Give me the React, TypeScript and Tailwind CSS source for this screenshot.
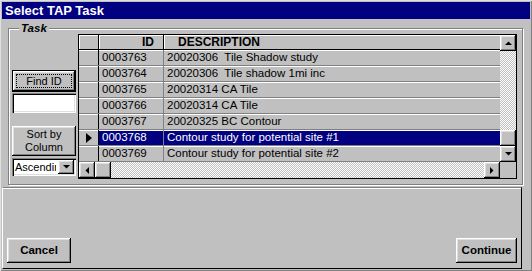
import React from "react";

const raised =
  "bg-[#c0c0c0] shadow-[inset_-1px_-1px_0_#000,inset_1px_1px_0_#fff,inset_-2px_-2px_0_#808080,inset_2px_2px_0_#dfdfdf]";
const sunken =
  "bg-white shadow-[inset_1px_1px_0_#808080,inset_2px_2px_0_#000,inset_-1px_-1px_0_#fff,inset_-2px_-2px_0_#dfdfdf]";
const dither =
  "bg-[image:repeating-conic-gradient(#fff_0_25%,#c0c0c0_0_50%)] bg-[length:2px_2px]";

const tasks = [
  { id: "0003763", description: "20020306  Tile Shadow study" },
  { id: "0003764", description: "20020306  Tile shadow 1mi inc" },
  { id: "0003765", description: "20020314 CA Tile" },
  { id: "0003766", description: "20020314 CA Tile" },
  { id: "0003767", description: "20020325 BC Contour" },
  { id: "0003768", description: "Contour study for potential site #1" },
  { id: "0003769", description: "Contour study for potential site #2" },
];

const selectedId = "0003768";

type Dir = "up" | "down" | "left" | "right";

const Arrow = ({ dir }: { dir: Dir }) => {
  const points = {
    up: "0,4 7,4 3.5,0.5",
    down: "0,0 7,0 3.5,3.5",
    left: "4,0 4,7 0.5,3.5",
    right: "0,0 0,7 3.5,3.5",
  }[dir];
  const vertical = dir === "up" || dir === "down";
  return (
    <svg width={vertical ? 7 : 4} height={vertical ? 4 : 7} viewBox={vertical ? "0 0 7 4" : "0 0 4 7"}>
      <polygon points={points} fill="#000" />
    </svg>
  );
};

const ScrollButton = ({ dir }: { dir: Dir }) => (
  <div className={`flex h-[16px] w-[16px] shrink-0 items-center justify-center ${raised}`}>
    <Arrow dir={dir} />
  </div>
);

const TaskGrid = () => (
  <div className="flex h-[145px] w-[439px] flex-col border border-black bg-[#c0c0c0] text-[11.5px] text-black">
    <div className="flex h-[127px]">
      <div className="flex w-[421px] flex-col">
        <div className="flex h-[15px] border-b border-black font-bold text-[12px] leading-[14px]">
          <div className="w-[20px] border-r border-black shadow-[inset_1px_1px_0_#fff]" />
          <div className="w-[65px] border-r border-black pr-[9px] text-right shadow-[inset_1px_1px_0_#fff]">ID</div>
          <div className="flex-1 pl-[14px] shadow-[inset_1px_1px_0_#fff]">DESCRIPTION</div>
        </div>
        {tasks.map((task) => {
          const selected = task.id === selectedId;
          const cell = selected
            ? "bg-[#000080] text-white"
            : "bg-[#c0c0c0] text-black";
          return (
            <div key={task.id} className="flex h-[16px] border-b border-[#808080] leading-[15px]">
              <div className="flex w-[20px] items-center justify-center border-r border-black shadow-[inset_0_1px_0_#fff]">
                {selected && (
                  <svg width="6" height="10" viewBox="0 0 6 10">
                    <polygon points="0,0 6,5 0,10" fill="#000" />
                  </svg>
                )}
              </div>
              <div className={`w-[65px] border-r border-[#808080] pl-[3px] shadow-[inset_0_1px_0_#fff] ${cell}`}>
                {task.id}
              </div>
              <div className={`flex-1 whitespace-pre pl-[3px] shadow-[inset_0_1px_0_#fff] ${cell}`}>
                {task.description}
              </div>
            </div>
          );
        })}
      </div>
      <div className="flex w-[16px] flex-col">
        <ScrollButton dir="up" />
        <div className={`flex-1 ${dither}`} />
        <div className={`h-[16px] w-[16px] ${raised}`} />
        <ScrollButton dir="down" />
      </div>
    </div>
    <div className="flex h-[16px]">
      <ScrollButton dir="left" />
      <div className={`h-[16px] w-[16px] ${raised}`} />
      <div className={`flex-1 ${dither}`} />
      <ScrollButton dir="right" />
      <div className="h-[16px] w-[16px] bg-[#c0c0c0]" />
    </div>
  </div>
);

export default function App() {
  return (
    <div className="flex h-[271px] w-[532px] flex-col bg-[#c0c0c0] p-[2px] font-['Liberation_Sans',Arial,sans-serif] shadow-[inset_1px_1px_0_#dfdfdf,inset_-1px_-1px_0_#808080]">
      <div className="flex h-[17px] items-center bg-[#000080] pl-[3px] text-[13px] font-bold text-white">
        Select TAP Task
      </div>

      <div className="relative ml-[6px] mt-[9px] h-[157px] w-[515px] border border-[#808080] pl-[3px] pt-[5px] shadow-[inset_1px_1px_0_#fff,1px_1px_0_#fff]">
        <span className="absolute left-[10px] top-[-8px] bg-[#c0c0c0] px-[2px] text-[11.5px] font-bold italic leading-[14px] text-black">
          Task
        </span>
        <div className="flex gap-[2px]">
          <div className="flex w-[64px] flex-col pt-[36px] text-[11px] text-black">
            <div className="h-[22px] border border-black">
              <div className={`h-full p-[3px] ${raised}`}>
                <div className="flex h-full items-center justify-center border border-dotted border-black leading-none">
                  Find ID
                </div>
              </div>
            </div>
            <div className={`mt-[1px] h-[20px] ${sunken}`} />
            <div className={`mt-[13px] flex h-[30px] flex-col items-center justify-center leading-[13px] ${raised}`}>
              <span>Sort by</span>
              <span>Column</span>
            </div>
            <div className={`mt-[2px] flex h-[18px] items-center p-[2px] ${sunken}`}>
              <div className="w-[42px] overflow-hidden whitespace-nowrap pl-[1px] text-[11px] leading-[14px]">
                Ascending
              </div>
              <div className={`ml-auto flex h-[14px] w-[16px] shrink-0 items-center justify-center ${raised}`}>
                <Arrow dir="down" />
              </div>
            </div>
          </div>
          <TaskGrid />
        </div>
      </div>

      <div className="mt-[2px] flex h-[82px] w-[520px] items-end justify-between border-t border-l border-t-[#808080] border-l-white border-b border-r border-b-black border-r-black pb-[5px] pl-[4px] pr-[4px] text-[11.5px] font-bold text-black shadow-[inset_0_1px_0_#fff]">
        <div className={`flex h-[25px] w-[64px] items-center justify-center ${raised}`}>Cancel</div>
        <div className={`flex h-[25px] w-[61px] items-center justify-center ${raised}`}>Continue</div>
      </div>
    </div>
  );
}
